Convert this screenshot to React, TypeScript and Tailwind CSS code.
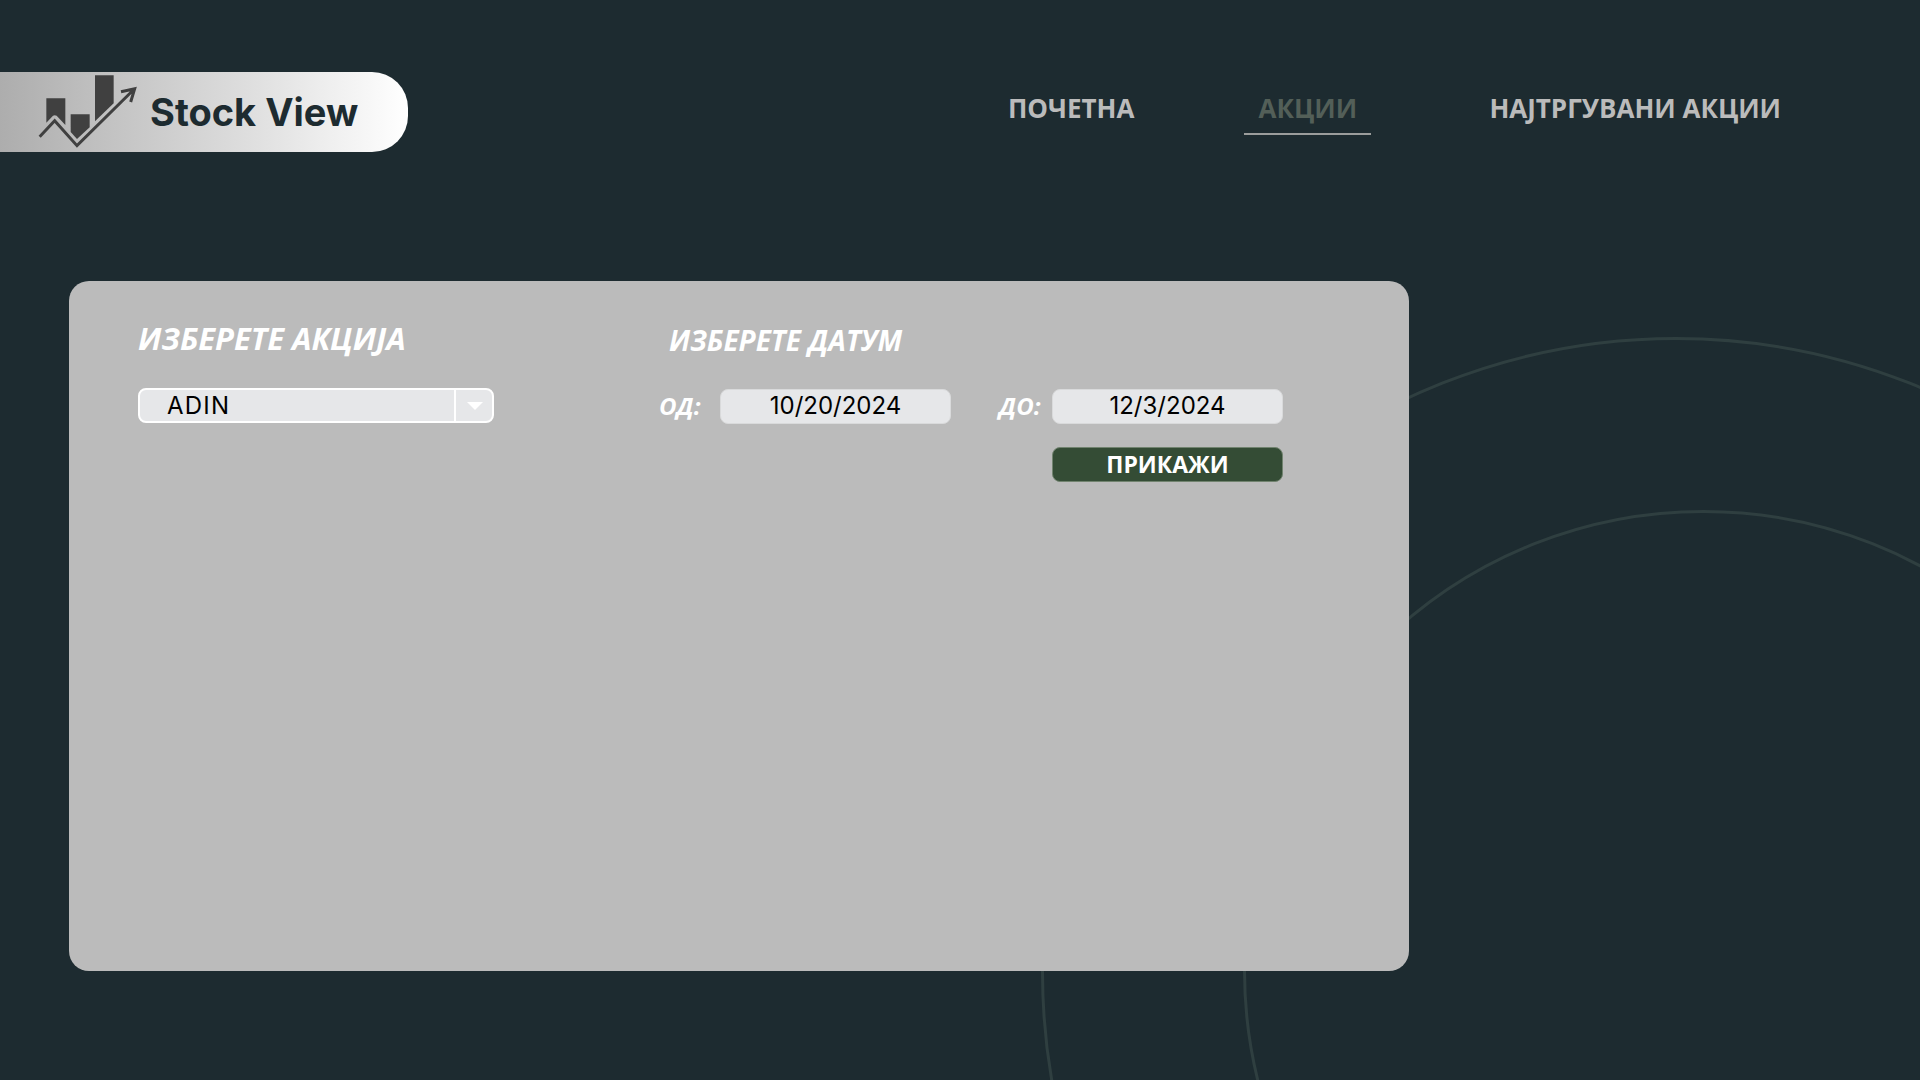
import { useState } from "react";

const CYRILLIC = "font-['Open_Sans','Noto_Sans',sans-serif]";

function Backdrop() {
  return (
    <svg
      aria-hidden="true"
      className="pointer-events-none absolute right-0 bottom-0 h-[760px] w-[900px]"
      viewBox="1020 320 900 760"
      fill="none"
      stroke="#2f3f40"
      strokeWidth="3"
    >
      <circle cx="1676" cy="972" r="633.5" />
      <circle cx="1703.5" cy="970.5" r="459" />
    </svg>
  );
}

function LogoMark() {
  return (
    <svg
      aria-hidden="true"
      className="h-[76px] w-[100px] shrink-0"
      viewBox="112 44 300 228"
      fill="#404040"
    >
      <path d="M137 117H194V197L168 169Q162 166 157 169L137 190Z" />
      <path d="M210 165H267V204L229 239L210 218Z" />
      <path d="M283 48H339V132L283 186Z" />
      <path
        d="M117 232L162 184L229 259L401 89M361 97L402 88L390 128"
        fill="none"
        stroke="#404040"
        strokeWidth="9"
      />
    </svg>
  );
}

const links = [
  { label: "ПОЧЕТНА", active: false },
  { label: "АКЦИИ", active: true },
  { label: "НАЈТРГУВАНИ АКЦИИ", active: false },
];

function Header() {
  return (
    <header className="flex items-start justify-between pt-[72px] pr-[139px]">
      <a
        href="#"
        className="flex h-[80px] w-[408px] items-center gap-3 rounded-r-[36px] bg-linear-to-r from-[#adadad] to-white pl-[38px] font-['Inter',sans-serif] text-[38px] font-bold text-[#1d2b30]"
      >
        <LogoMark />
        Stock View
      </a>
      <nav className="mt-[18px] flex">
        {links.map((l) => (
          <a
            key={l.label}
            href="#"
            aria-current={l.active ? "page" : undefined}
            className={
              l.active
                ? "mr-[118px] ml-[110px] h-[45px] w-[127px] border-b-2 border-[#9b9d9c] text-center text-[26px] leading-9 font-bold text-[#535f58]"
                : "h-[45px] text-[26px] leading-9 font-bold text-[#bbbbbb]"
            }
          >
            {l.label}
          </a>
        ))}
      </nav>
    </header>
  );
}

function DateField({
  id,
  label,
  value,
  onChange,
}: {
  id: string;
  label: string;
  value: string;
  onChange: (v: string) => void;
}) {
  return (
    <>
      <label
        htmlFor={id}
        className="text-2xl leading-9 font-bold text-white italic"
      >
        {label}
      </label>
      <input
        id={id}
        type="text"
        value={value}
        onChange={(e) => onChange(e.target.value)}
        className="h-[35px] w-[231px] rounded-lg border border-[#d9dadb] bg-[#e6e7e9] pb-0.5 text-center font-['Inter',sans-serif] text-2xl text-black"
      />
    </>
  );
}

function Filters() {
  const [stock, setStock] = useState("ADIN");
  const [from, setFrom] = useState("10/20/2024");
  const [to, setTo] = useState("12/3/2024");

  return (
    <form
      onSubmit={(e) => e.preventDefault()}
      className="flex items-start justify-between"
    >
      <div>
        <label
          htmlFor="stock"
          className="block text-[31px] leading-9 font-bold text-white italic"
        >
          ИЗБЕРЕТЕ АКЦИЈА
        </label>
        <div className="relative mt-8 w-[356px]">
          <select
            id="stock"
            value={stock}
            onChange={(e) => setStock(e.target.value)}
            className="block h-[35px] w-full appearance-none rounded-lg border-2 border-white bg-[#e6e7e9] pl-[27px] font-['Inter',sans-serif] text-2xl leading-7 tracking-wider text-black"
          >
            <option>ADIN</option>
          </select>
          <span className="pointer-events-none absolute inset-y-0 right-0 flex w-[40px] items-center justify-center border-l-2 border-white">
            <svg aria-hidden="true" width="16" height="8" viewBox="0 0 16 8">
              <path d="M0 0H16L8 8Z" fill="white" />
            </svg>
          </span>
        </div>
      </div>
      <fieldset>
        <legend className="pl-[10px] text-[28px] leading-10 font-bold text-white italic">
          ИЗБЕРЕТЕ ДАТУМ
        </legend>
        <div className="mt-7 grid h-[35px] grid-cols-[61px_231px_48px_53px_231px] items-center">
          <DateField id="from" label="ОД:" value={from} onChange={setFrom} />
          <span />
          <DateField id="to" label="ДО:" value={to} onChange={setTo} />
        </div>
        <button
          type="submit"
          className="mt-6 ml-auto block h-[35px] w-[231px] rounded-lg border border-[#71836f] bg-[#344c35] pb-0.5 text-[23px] leading-7 font-bold text-white"
        >
          ПРИКАЖИ
        </button>
      </fieldset>
    </form>
  );
}

export default function App() {
  return (
    <div
      className={`relative flex min-h-screen flex-col overflow-hidden bg-[#1d2b30] ${CYRILLIC}`}
    >
      <Backdrop />
      <div className="relative flex flex-1 flex-col">
        <Header />
        <main className="mt-[129px] grid flex-1 grid-cols-[1340fr_511fr] pb-[109px] pl-[69px]">
          <section className="rounded-[20px] bg-[#bbbbbb] pt-[39px] pr-[126px] pl-[69px]">
            <Filters />
          </section>
        </main>
      </div>
    </div>
  );
}
